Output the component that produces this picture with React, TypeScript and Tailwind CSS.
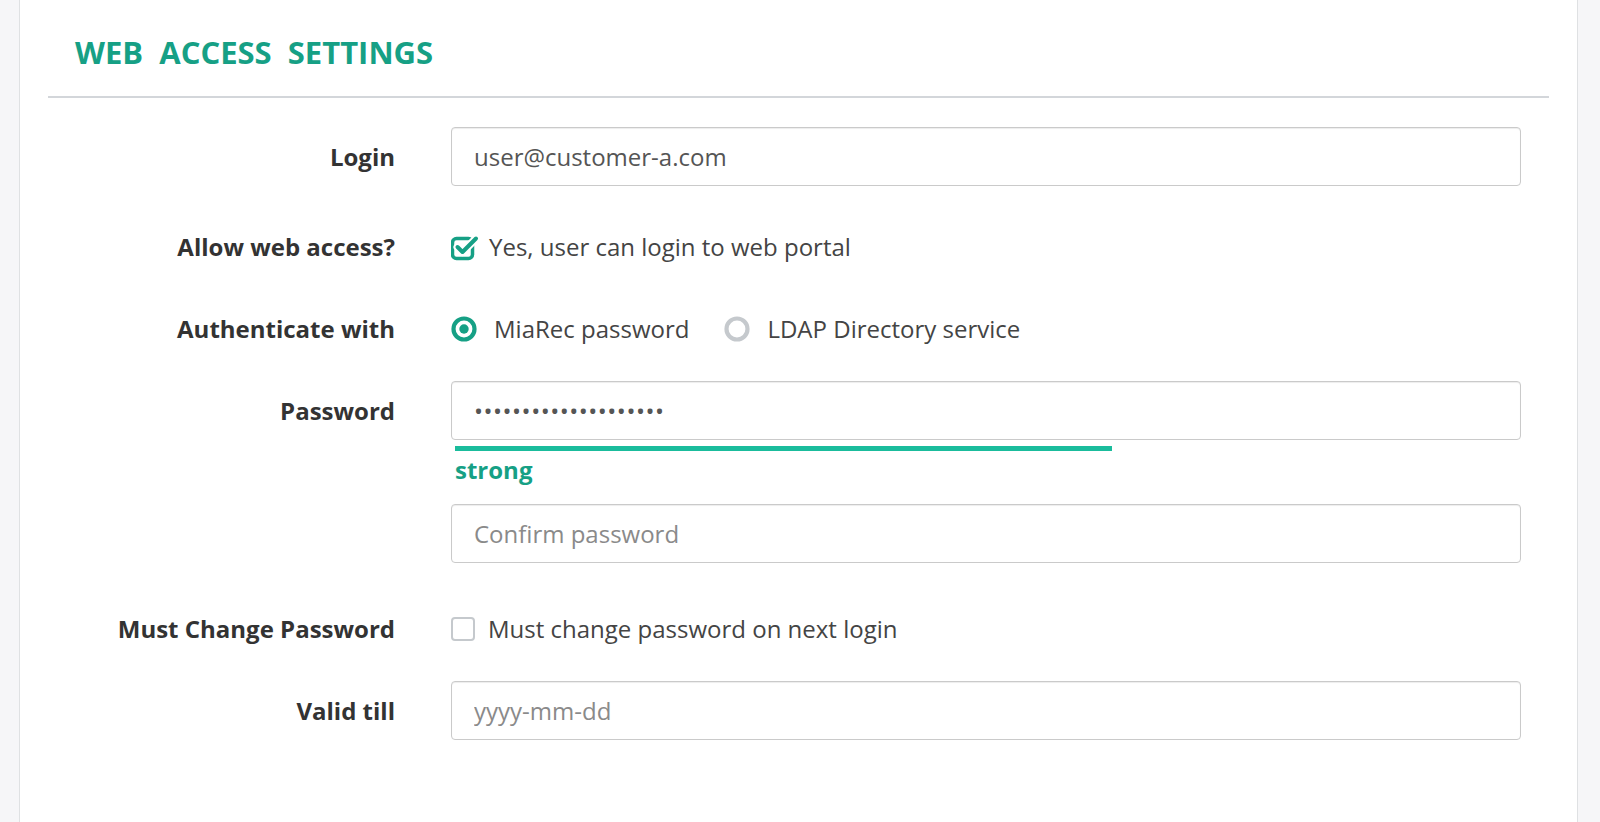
import React from "react";

const TEAL = "#16a085";

const labelCls = "w-[347px] shrink-0 text-right text-[24px] font-bold text-[#333]";
const inputCls =
  "h-[59px] w-full rounded-[4px] border border-[#cacaca] bg-white px-[22px] text-[24px] text-[#555] shadow-[inset_0_1px_1px_rgba(0,0,0,0.075)] outline-none placeholder:text-[#8a8a8a]";

function CheckedBox() {
  return (
    <svg width="28" height="28" viewBox="0 0 28 28" className="shrink-0">
      <rect x="1.5" y="5.5" width="20" height="20" rx="4" fill="none" stroke={TEAL} strokeWidth="3.5" />
      <path d="M6.5 14 L11.5 19 L25 5.5" fill="none" stroke="#fff" strokeWidth="8" strokeLinecap="round" strokeLinejoin="round" />
      <path d="M6.5 14 L11.5 19 L25 5.5" fill="none" stroke={TEAL} strokeWidth="4" strokeLinecap="round" strokeLinejoin="round" />
    </svg>
  );
}

function EmptyBox() {
  return <span className="block h-[24px] w-[24px] shrink-0 rounded-[4px] border-[2.5px] border-[#c5c9cd] bg-white" />;
}

function Radio({ checked }: { checked?: boolean }) {
  return (
    <svg width="26" height="26" viewBox="0 0 26 26" className="shrink-0">
      <circle cx="13" cy="13" r="10.5" fill="none" stroke={checked ? TEAL : "#c5c9cd"} strokeWidth="4.2" />
      {checked && <circle cx="13" cy="13" r="4.7" fill={TEAL} />}
    </svg>
  );
}

function Row({ label, className, children }: { label?: string; className?: string; children: React.ReactNode }) {
  return (
    <div className={`flex items-center gap-[56px] ${className ?? ""}`}>
      <div className={labelCls}>{label}</div>
      <div className="flex min-w-0 flex-1 items-center">{children}</div>
    </div>
  );
}

export default function App() {
  return (
    <div
      className="min-h-screen bg-[#f6f6f8] pl-[19px] pr-[22px]"
      style={{ fontFamily: '"Open Sans", "Liberation Sans", sans-serif' }}
    >
      <div className="min-h-[822px] border-x border-[#dfe1e3] bg-white px-[28px]">
        <h2 className="pl-[27px] pt-[32px] text-[31px] font-bold leading-[40px] text-[#16a085]">
          WEB&nbsp; ACCESS&nbsp; SETTINGS
        </h2>
        <div className="mt-[24px] h-[2px] bg-[#d3d6da]" />

        <div className="pr-[28px]">
          <Row label="Login" className="mt-[29px]">
            <input className={inputCls} defaultValue="user@customer-a.com" readOnly />
          </Row>

          <Row label="Allow web access?" className="mt-[46px] h-[30px]">
            <CheckedBox />
            <span className="ml-[10px] text-[24px] text-[#444]">Yes, user can login to web portal</span>
          </Row>

          <Row label="Authenticate with" className="mt-[52px] h-[30px]">
            <Radio checked />
            <span className="ml-[17px] text-[24px] text-[#444]">MiaRec password</span>
            <span className="ml-[35px]">
              <Radio />
            </span>
            <span className="ml-[17px] text-[24px] text-[#444]">LDAP Directory service</span>
          </Row>

          <Row label="Password" className="mt-[37px]">
            <input
              type="password"
              className={`${inputCls} tracking-[0.5px]`}
              defaultValue="abcdefghijklmnopqrst"
              readOnly
            />
          </Row>

          <Row className="mt-[6px]">
            <div className="w-full">
              <div className="ml-[4px] h-[5px] w-[657px] bg-[#1abc9c]" />
              <div className="ml-[4px] mt-[3px] text-[24px] font-bold leading-[32px] text-[#16a085]">strong</div>
            </div>
          </Row>

          <Row className="mt-[18px]">
            <input className={inputCls} placeholder="Confirm password" />
          </Row>

          <Row label="Must Change Password" className="mt-[51px] h-[30px]">
            <EmptyBox />
            <span className="ml-[13px] text-[24px] text-[#444]">Must change password on next login</span>
          </Row>

          <Row label="Valid till" className="mt-[37px]">
            <input className={inputCls} placeholder="yyyy-mm-dd" />
          </Row>
        </div>
      </div>
    </div>
  );
}
